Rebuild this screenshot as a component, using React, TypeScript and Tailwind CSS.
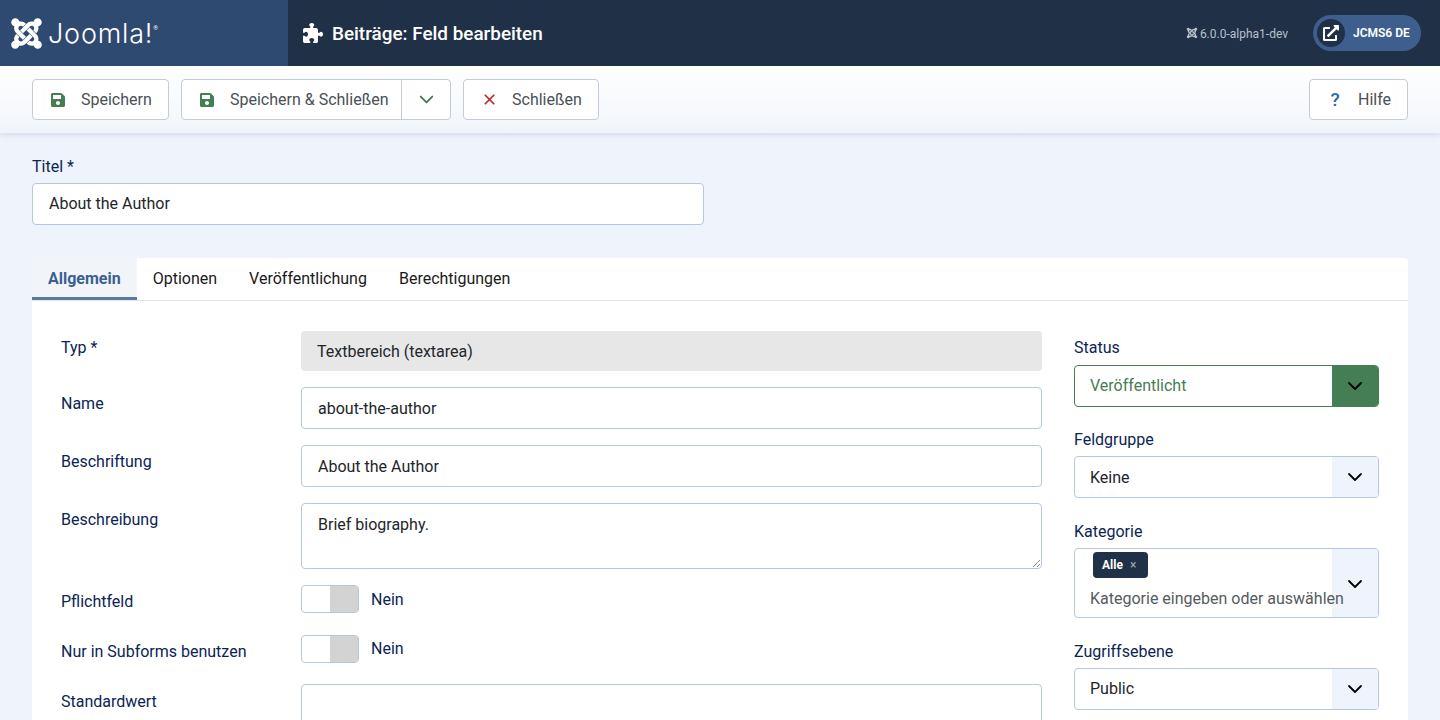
import { ChevronDown, X } from "lucide-react";
import { FaExternalLinkAlt, FaJoomla, FaSave } from "react-icons/fa";
import { FaPuzzlePiece } from "react-icons/fa6";

function ToolbarButton({ icon, label, width }: { icon: React.ReactNode; label: string; width: string }) {
  return (
    <button className={`flex h-[41px] items-center rounded-[4px] border border-[#c3cdd9] bg-white text-[16px] text-[#495057] ${width}`}>
      <span className="flex w-[48px] shrink-0 justify-center pl-[4px]">{icon}</span>
      <span>{label}</span>
    </button>
  );
}

function FormRow({ label, children, className, labelPad = "pt-[5px]" }: { label: string; children: React.ReactNode; className: string; labelPad?: string }) {
  return (
    <div className={`flex ${className}`}>
      <label className={`w-[240px] shrink-0 text-[16px] leading-[24px] text-[#0b2455] ${labelPad}`}>{label}</label>
      <div className="min-w-0 flex-1">{children}</div>
    </div>
  );
}

function TextField({ value, height = "h-[42px]" }: { value: string; height?: string }) {
  return (
    <div className={`rounded-[4px] border border-[#b5c7e0] bg-white px-4 pt-[9px] text-[16px] leading-[24px] text-[#22262a] ${height}`}>
      {value}
    </div>
  );
}

function Toggle({ label, textClass = "" }: { label: string; textClass?: string }) {
  return (
    <div className="flex items-center">
      <div className="flex h-[28px] w-[58px] overflow-hidden rounded-[4px] border border-[#b5c7e0] bg-white">
        <div className="w-[28px]" />
        <div className="flex-1 bg-[#d3d3d3]" />
      </div>
      <span className={`ml-[12px] text-[16px] text-[#0b2455] ${textClass}`}>{label}</span>
    </div>
  );
}

function FieldLabel({ children, className = "mb-[4px]" }: { children: React.ReactNode; className?: string }) {
  return <label className={`block text-[16px] leading-[24px] text-[#0b2455] ${className}`}>{children}</label>;
}

function SelectField({ label, value, mt, textPad = "" }: { label: string; value: string; mt: string; textPad?: string }) {
  return (
    <div className={mt}>
      <FieldLabel>{label}</FieldLabel>
      <div className="flex h-[42px] overflow-hidden rounded-[4px] border border-[#b5c7e0] bg-white text-[16px] text-[#22262a]">
        <div className={`flex flex-1 items-center pl-[15px] ${textPad}`}>{value}</div>
        <div className="flex w-[46px] items-center justify-center bg-[#eff4fc]">
          <ChevronDown size={24} strokeWidth={1.8} className="text-black" />
        </div>
      </div>
    </div>
  );
}

export default function App() {
  return (
    <div className="h-[720px] overflow-hidden bg-[#eff4fc] font-['Roboto',sans-serif]">
      {/* header */}
      <header className="flex h-[66px] items-center bg-[#1f3047] text-white">
        <div className="flex h-full w-[288px] items-center bg-[#2f4a71] pl-[9px]">
          <FaJoomla size={35} className="shrink-0" />
          <span className="ml-[4px] mt-[1px] font-['Inter',sans-serif] text-[27px] font-light leading-none tracking-[0.8px]">Joomla!</span>
          <span className="mb-[12px] text-[6px]">®</span>
        </div>
        <div className="flex items-center pl-[15px]">
          <FaPuzzlePiece size={20} />
          <h1 className="ml-[9px] mt-[2px] text-[18.9px] font-medium">Beiträge: Feld bearbeiten</h1>
        </div>
        <div className="ml-auto flex items-center pr-[19px]">
          <FaJoomla size={12} className="text-[#b9c1cb]" />
          <span className="ml-[2px] mt-[2px] text-[12px] text-[#b9c1cb]">6.0.0-alpha1-dev</span>
          <div className="ml-[25px] flex h-[36px] w-[108px] items-center rounded-full bg-[#3e5f8d] pl-[4px]">
            <div className="flex size-[28px] items-center justify-center rounded-full bg-[#1f3047]">
              <FaExternalLinkAlt size={16} />
            </div>
            <span className="ml-[8px] text-[12px] font-semibold">JCMS6 DE</span>
          </div>
        </div>
      </header>

      {/* toolbar */}
      <div className="flex h-[67px] items-center gap-[12px] bg-linear-to-b from-white to-[#f1f5fb] px-[32px] shadow-[0_2px_6px_rgba(50,70,110,0.14)]">
        <ToolbarButton width="w-[137px]" label="Speichern" icon={<FaSave size={16} className="-ml-[2px] text-[#457d54]" />} />
        <div className="flex h-[41px] w-[270px] rounded-[4px] border border-[#c3cdd9] bg-white text-[16px] text-[#495057]">
          <div className="flex flex-1 items-center border-r border-[#c3cdd9]">
            <span className="flex w-[48px] shrink-0 justify-center pl-[4px]"><FaSave size={16} className="-ml-[2px] text-[#457d54]" /></span>
            <span>Speichern &amp; Schließen</span>
          </div>
          <div className="flex w-[48px] items-center justify-center">
            <ChevronDown size={23} strokeWidth={2} className="text-[#457d54]" />
          </div>
        </div>
        <ToolbarButton width="w-[136px]" label="Schließen" icon={<X size={17} strokeWidth={2.4} className="-ml-[2px] text-[#c52827]" />} />
        <div className="ml-auto">
          <ToolbarButton width="w-[99px]" label="Hilfe" icon={<span className="-ml-[2px] text-[19px] font-medium leading-none text-[#2a69b8]">?</span>} />
        </div>
      </div>

      {/* title */}
      <div className="px-[32px] pt-[22px]">
        <label className="block text-[16px] leading-[24px] text-[#0b2455]">Titel *</label>
        <div className="mt-[4px] h-[42px] w-[672px] rounded-[4px] border border-[#b5c7e0] bg-white px-4 pt-[8px] text-[16px] leading-[24px] text-[#22262a]">
          About the Author
        </div>
      </div>

      {/* card with tabs */}
      <main className="mx-[32px] mt-[33px] rounded-t-[4px] bg-white">
        <nav className="flex h-[43px] border-b border-[#dfe7f3] text-[16px] text-[#1a1a1a]">
          <a className="flex h-[42px] items-center border-b-[3px] border-[#5b7ba6] bg-[#f1f5fa] px-4 pt-[3px] font-bold text-[#3c5f90]">Allgemein</a>
          <a className="flex h-[42px] items-center px-4">Optionen</a>
          <a className="flex h-[42px] items-center px-4">Veröffentlichung</a>
          <a className="flex h-[42px] items-center px-4">Berechtigungen</a>
        </nav>

        <div className="flex gap-[32px] px-[29px] pt-[30px]">
          <section className="w-[981px] shrink-0">
            <FormRow label="Typ *" className="">
              <div className="flex h-[40px] items-center rounded-[4px] bg-[#e7e7e7] px-4 pt-[1px] text-[16px] text-[#22262a]">Textbereich (textarea)</div>
            </FormRow>
            <FormRow label="Name" className="mt-[16px]"><TextField value="about-the-author" /></FormRow>
            <FormRow label="Beschriftung" className="mt-[16px]"><TextField value="About the Author" /></FormRow>
            <FormRow label="Beschreibung" className="mt-[16px]">
              <div className="relative">
                <TextField value="Brief biography." height="h-[66px]" />
                <svg viewBox="0 0 8 8" className="absolute bottom-[2px] right-[2px] size-[8px] text-[#8a8a8a]">
                  <path d="M1 8 8 1M5 8l3-3" stroke="currentColor" fill="none" strokeWidth="1" />
                </svg>
              </div>
            </FormRow>
            <FormRow label="Pflichtfeld" className="mt-[16px]"><Toggle label="Nein" textClass="pt-[1px]" /></FormRow>
            <FormRow label="Nur in Subforms benutzen" className="mt-[21px]"><Toggle label="Nein" /></FormRow>
            <FormRow label="Standardwert" className="mt-[20px]" labelPad="pt-[6px]"><TextField value="" height="h-[66px]" /></FormRow>
          </section>

          <aside className="w-[305px] shrink-0 pt-[5px]">
            <FieldLabel className="mb-[5px]">Status</FieldLabel>
            <div className="flex h-[42px] overflow-hidden rounded-[4px] border border-[#457d54] bg-white text-[16px] text-[#457d54]">
              <div className="flex flex-1 items-center pl-[15px]">Veröffentlicht</div>
              <div className="flex w-[46px] items-center justify-center bg-[#457d54]">
                <ChevronDown size={24} strokeWidth={1.8} className="text-black" />
              </div>
            </div>
            <SelectField label="Feldgruppe" value="Keine" mt="mt-[21px]" textPad="pt-[1px]" />
            <div className="mt-[22px]">
              <FieldLabel>Kategorie</FieldLabel>
              <div className="relative h-[70px] overflow-hidden rounded-[4px] border border-[#b5c7e0] bg-white">
                <div className="absolute inset-y-0 right-0 flex w-[46px] items-center justify-center bg-[#eff4fc] pt-[1px]">
                  <ChevronDown size={24} strokeWidth={1.8} className="text-black" />
                </div>
                <div className="relative pl-[18px] pt-[3px]">
                  <span className="flex h-[26px] w-[55px] items-center rounded-[4px] bg-[#1f3047] pl-[9px] text-[12px] font-bold text-white">
                    Alle<span className="ml-[7px] text-[12px] font-normal text-[#a3adba]">×</span>
                  </span>
                </div>
                <div className="relative mt-[9px] whitespace-nowrap pl-[15px] text-[16px] leading-[24px] text-[#565b60]">Kategorie eingeben oder auswählen</div>
              </div>
            </div>
            <SelectField label="Zugriffsebene" value="Public" mt="mt-[22px]" />
          </aside>
        </div>
      </main>
    </div>
  );
}
